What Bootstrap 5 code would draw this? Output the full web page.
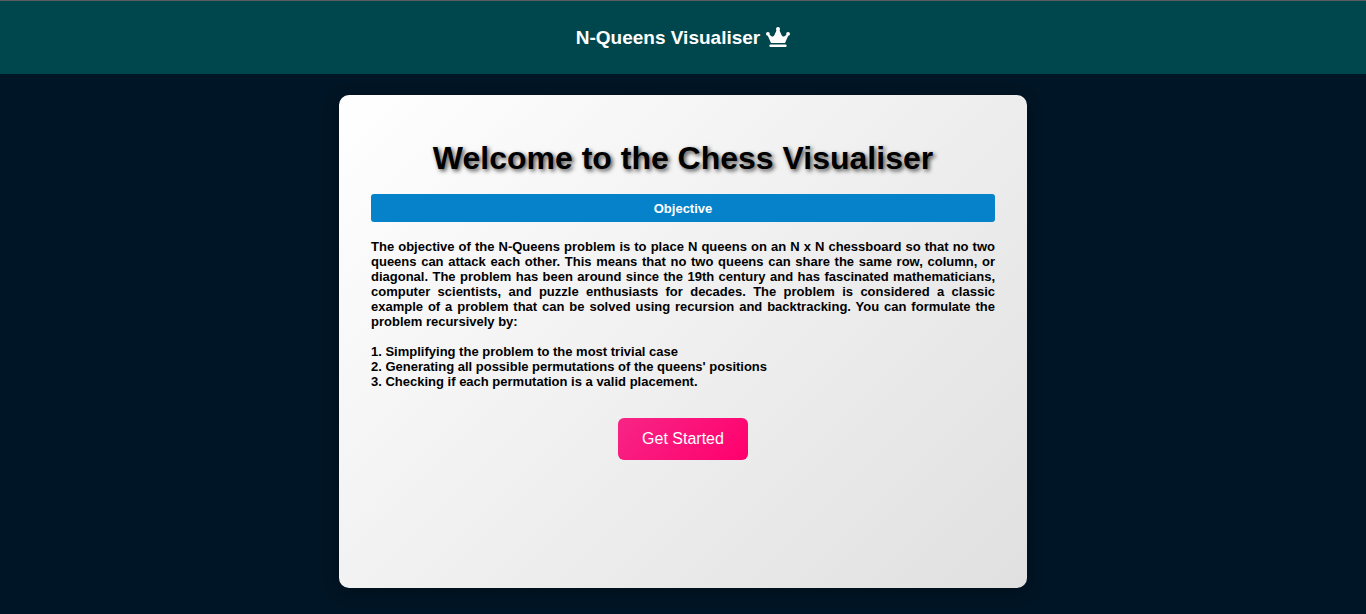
<!DOCTYPE html>
<html lang="en">
<head>
<meta charset="utf-8">
<meta name="viewport" content="width=device-width, initial-scale=1">
<title>N-Queens Visualiser</title>
<link rel="stylesheet" href="https://cdn.jsdelivr.net/npm/bootstrap@5.3.0/dist/css/bootstrap.min.css">
<style>
  body { background: #001525; font-family: "Liberation Sans", Arial, sans-serif; font-size: 13px; line-height: 15px; color: #000; }
  .site-header { background: #00474d; border-top: 1px solid #5c5c5c; height: 74px; }
  .site-title { font-size: 19px; line-height: 22px; gap: 6px; color: #fff; }
  .welcome { max-width: 688px; padding: 41px 32px 32px; margin: 21px auto 26px; border-radius: 10px; background: linear-gradient(135deg, #fff, #e0e0e0); box-shadow: 0 4px 16px rgba(0, 0, 0, .3); }
  .welcome-title { font-size: 32px; line-height: 45px; margin-bottom: 13px; text-shadow: 2px 2px 4px rgba(0, 0, 0, .7); }
  .objective { font-size: 13px; line-height: 16px; padding: 7px 6px 5px; margin-bottom: 17px; border-radius: 3px; background: #0582ca; color: #fff; }
  .intro { text-align: justify; margin-bottom: 15px; }
  .steps { margin-bottom: 29px; }
  .btn-start { --bs-btn-color: #fff; --bs-btn-hover-color: #fff; --bs-btn-active-color: #fff; --bs-btn-font-size: 16px; --bs-btn-line-height: 18px; --bs-btn-padding-x: 24px; --bs-btn-padding-y: 12px; --bs-btn-border-width: 0; --bs-btn-border-radius: 6px; background: linear-gradient(135deg, #f72585, #ff006e); }
</style>
</head>
<body class="d-flex flex-column min-vh-100">
<header class="site-header d-flex align-items-center justify-content-center">
  <h1 class="site-title fw-bold m-0 d-flex align-items-start">
    <span>N-Queens Visualiser</span>
    <svg width="24" height="20" viewBox="0 0 24 20" fill="currentColor" aria-hidden="true">
      <circle cx="1.900" cy="6.800" r="1.900"/><circle cx="12" cy="2" r="2"/><circle cx="22.100" cy="6.800" r="1.900"/>
      <path d="M1.500 8 5 16H19L22.500 8 20.800 7.600 18.500 9.200Q16.900 10.200 15.800 8.600L13.300 3H10.700L8.200 8.600Q7.100 10.200 5.500 9.200L3.200 7.600Z"/>
      <rect x="3.500" y="17.500" width="17" height="2.500" rx=".7"/>
    </svg>
  </h1>
</header>
<main class="welcome w-100 flex-grow-1">
  <h2 class="welcome-title fw-bold text-center">Welcome to the Chess Visualiser</h2>
  <h3 class="objective fw-bold text-center">Objective</h3>
  <p class="intro fw-bold">The objective of the N-Queens problem is to place N queens on an N x N chessboard so that no two queens can attack each other. This means that no two queens can share the same row, column, or diagonal. The problem has been around since the 19th century and has fascinated mathematicians, computer scientists, and puzzle enthusiasts for decades. The problem is considered a classic example of a problem that can be solved using recursion and backtracking. You can formulate the problem recursively by:</p>
  <div class="steps fw-bold">
    <div>1. Simplifying the problem to the most trivial case</div>
    <div>2. Generating all possible permutations of the queens' positions</div>
    <div>3. Checking if each permutation is a valid placement.</div>
  </div>
  <div class="text-center">
    <button type="button" class="btn btn-start">Get Started</button>
  </div>
</main>
<script src="https://cdn.jsdelivr.net/npm/bootstrap@5.3.0/dist/js/bootstrap.bundle.min.js"></script>
</body>
</html>
